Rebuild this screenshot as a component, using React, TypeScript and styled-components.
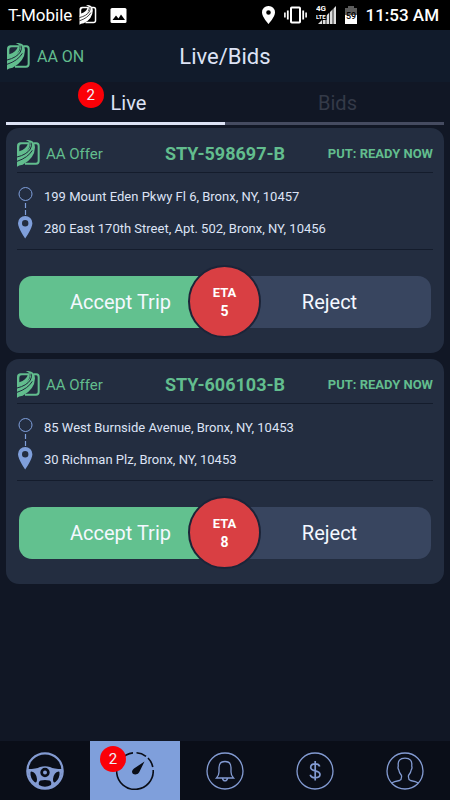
import React from "react";
import styled, { createGlobalStyle } from "styled-components";

const GREEN = "#62bd8e";
const BLUE = "#7f9fdb";

const GlobalStyle = createGlobalStyle`
  *, *::before, *::after { box-sizing: border-box; }
  body {
    margin: 0;
    background: #111725;
    color: #dde3f5;
    font-family: Roboto, "Liberation Sans", sans-serif;
  }
  button {
    margin: 0;
    padding: 0;
    border: 0;
    background: none;
    color: inherit;
    font: inherit;
    cursor: pointer;
  }
  svg { display: block; flex: none; }
`;

const Screen = styled.div`
  display: flex;
  flex-direction: column;
  min-height: 100vh;
`;

const StatusBar = styled.div`
  display: flex;
  align-items: center;
  justify-content: space-between;
  height: 30px;
  padding: 0 11px 0 8px;
  background: #000;
  color: #fff;
  font-size: 17px;
`;

const StatusGroup = styled.div<{ $gap: number }>`
  display: flex;
  align-items: center;
  gap: ${(p) => p.$gap}px;
`;

const Clock = styled.span`
  font-weight: 500;
`;

const Header = styled.header`
  display: grid;
  grid-template-columns: 1fr auto 1fr;
  align-items: center;
  height: 52px;
  padding: 0 7px;
  background: #111b2b;
`;

const AutoAccept = styled.div`
  display: flex;
  align-items: center;
  gap: 7px;
  color: ${GREEN};
  font-size: 16px;
`;

const Title = styled.h1`
  margin: 0;
  font-size: 22px;
  font-weight: 400;
`;

const Tabs = styled.div`
  display: flex;
  padding: 0 6px;
`;

const Tab = styled.button<{ $active?: boolean }>`
  display: flex;
  flex: 1;
  align-items: center;
  justify-content: center;
  height: 43px;
  padding-top: 2px;
  border-bottom: 3px solid ${(p) => (p.$active ? "#dde3f5" : "#454b60")};
  color: ${(p) => (p.$active ? "#dde3f5" : "#343a48")};
  font-size: 20px;
`;

const TabLabel = styled.span<{ $badged?: boolean }>`
  position: relative;
  padding-left: ${(p) => (p.$badged ? 26 : 6)}px;
`;

const Badge = styled.span<{ $left: number; $top: number }>`
  position: absolute;
  left: ${(p) => p.$left}px;
  top: ${(p) => p.$top}px;
  width: 26px;
  height: 26px;
  border-radius: 50%;
  background: #fb0007;
  color: #eef0fa;
  font-size: 15px;
  line-height: 26px;
  text-align: center;
`;

const Offers = styled.main`
  display: flex;
  flex: 1;
  flex-direction: column;
  gap: 6px;
  padding: 3px 6px 6px;
`;

const Card = styled.article`
  padding: 0 11px 25px;
  border-radius: 13px;
  background: #232d40;
`;

const CardHeader = styled.div`
  display: grid;
  grid-template-columns: 1fr auto 1fr;
  align-items: center;
  height: 45px;
  padding-top: 7px;
  border-bottom: 1px solid #141c2c;
  color: ${GREEN};
`;

const OfferKind = styled.span`
  display: flex;
  align-items: center;
  gap: 6px;
  font-size: 15px;
`;

const TripId = styled.h2`
  margin: 0;
  font-size: 18px;
  font-weight: 700;
`;

const Pickup = styled.span`
  font-size: 13px;
  font-weight: 700;
  text-align: right;
`;

const Route = styled.div`
  display: flex;
  gap: 11px;
  height: 77px;
  padding-top: 14px;
  border-bottom: 1px solid #141c2c;
`;

const Stops = styled.ul`
  margin: 0;
  padding: 0;
  list-style: none;
  font-size: 13px;
  line-height: 20px;
`;

const Stop = styled.li`
  margin-bottom: 12px;
`;

const Actions = styled.div`
  position: relative;
  display: flex;
  margin: 26px 2px 0;
`;

const Action = styled.button<{ $accept?: boolean }>`
  flex: 1;
  height: 52px;
  padding: ${(p) => (p.$accept ? "0 3px 0 0" : "0 0 0 3px")};
  border-radius: ${(p) => (p.$accept ? "13px 0 0 13px" : "0 13px 13px 0")};
  background: ${(p) => (p.$accept ? "#62c18f" : "#38455f")};
  color: #f4f8ff;
  font-size: 20px;
`;

const Eta = styled.div`
  position: absolute;
  left: 50%;
  top: 50%;
  display: flex;
  flex-direction: column;
  align-items: center;
  justify-content: center;
  width: 73px;
  height: 73px;
  margin: -37px;
  border: 2px solid #1c2438;
  border-radius: 50%;
  background: #d93f43;
  color: #fff;
  font-size: 13px;
  font-weight: 700;
  line-height: 18px;
`;

const EtaValue = styled.span`
  font-size: 14px;
`;

const BottomNav = styled.nav`
  display: flex;
  height: 59px;
  background: #0a0e18;
`;

const NavItem = styled.button<{ $active?: boolean }>`
  position: relative;
  display: flex;
  flex: 1;
  align-items: center;
  justify-content: center;
  background: ${(p) => (p.$active ? BLUE : "transparent")};
  color: ${(p) => (p.$active ? "#0a0e18" : "#839bd2")};
`;

const NavIconBox = styled.span`
  position: relative;
  display: block;
`;

interface LogoProps {
  width?: number;
  height?: number;
  gapColor?: string;
}

const Logo = ({ width = 23, height = 27, gapColor = "#1f293b" }: LogoProps) => (
  <svg width={width} height={height} viewBox="0 0 69 81" aria-hidden="true">
    <path d="M50 10H58Q65 10 65 18V63Q65 71 57 71H24" fill="none" stroke="currentColor" strokeWidth="6" />
    <path d="M0 48V18Q0 7 11 7H38Q40 17 34 27Q25 42 0 48Z" fill="currentColor" />
    <path d="M7 34V20Q7 13 14 13H32Q28 27 7 34Z" fill={gapColor} />
    <path d="M26 0Q54-2 54 22Q53 56 17 74Q5 75 0 80V44Q28 38 37 24Q46 7 26 0Z" fill="currentColor" />
    <path d="M0 51Q29 44 40 27Q46 16 42 8M0 64Q33 53 46 31" fill="none" stroke={gapColor} strokeWidth="3" />
  </svg>
);

const PictureIcon = () => (
  <svg width="17" height="17" viewBox="0 0 17 17" aria-hidden="true">
    <rect x="0.5" y="1" width="16" height="15" rx="1.5" fill="#fff" />
    <path d="M2.5 13 6 8.5 8.5 11.5 11 7.5 15 13Z" fill="#000" />
  </svg>
);

const LocationIcon = () => (
  <svg width="13" height="18" viewBox="0 0 13 18" aria-hidden="true">
    <path fill="#fff" fillRule="evenodd" d="M6.5 0A6.4 6.4 0 0 0 0 6.5C0 11 6.5 18 6.5 18S13 11 13 6.5A6.4 6.4 0 0 0 6.5 0Zm0 4.2a2.3 2.3 0 1 1 0 4.6 2.3 2.3 0 0 1 0-4.6Z" />
  </svg>
);

const VibrateIcon = () => (
  <svg width="23" height="18" viewBox="0 0 23 18" fill="none" stroke="#fff" aria-hidden="true">
    <rect x="7" y="1.5" width="9" height="15" rx="0.8" strokeWidth="2" />
    <path d="M3.8 4.5v9M19.2 4.5v9" strokeWidth="1.8" />
    <path d="M.9 6.5v5M22.1 6.5v5" strokeWidth="1.6" />
  </svg>
);

const SignalIcon = () => (
  <svg width="20" height="20" viewBox="0 0 20 20" aria-hidden="true">
    <path d="M2 19 20 1V19Z" fill="#ddd" />
    <path d="M6.5 12v8M10 9v11M13.5 5v15M17 2v18" stroke="#000" strokeWidth="0.8" />
    <g fill="#fff" stroke="#000" strokeWidth="2" paintOrder="stroke" fontFamily="Roboto, sans-serif" fontWeight="700">
      <text x="0" y="6" fontSize="8">4G</text>
      <text x="0" y="14" fontSize="6">LTE</text>
    </g>
  </svg>
);

const BatteryIcon = () => (
  <svg width="12" height="18" viewBox="0 0 12 18" aria-hidden="true">
    <path d="M3 0h6v2h3v8H0V2h3Z" fill="#5c5c5c" />
    <path d="M0 9h12v9H0Z" fill="#fff" />
    <text x="6" y="13" textAnchor="middle" fontFamily="Roboto, sans-serif" fontWeight="500" fontSize="9" fill="#000">59</text>
  </svg>
);

const RouteIcon = () => (
  <svg width="16" height="53" viewBox="0 0 16 53" aria-hidden="true">
    <circle cx="8.5" cy="7" r="6.5" fill="none" stroke={BLUE} strokeWidth="1" />
    <path d="M8.5 16v5M8.5 23v5" stroke={BLUE} strokeWidth="1.2" />
    <path fill={BLUE} fillRule="evenodd" d="M8.2 29A7.2 7.2 0 0 0 1 36.2C1 41 8.2 51.5 8.2 51.5S15.4 41 15.4 36.2A7.2 7.2 0 0 0 8.2 29Zm0 4a3.2 3.2 0 1 1 0 6.4 3.2 3.2 0 0 1 0-6.4Z" />
  </svg>
);

const navSvg = {
  width: 38,
  height: 38,
  viewBox: "0 0 38 38",
  fill: "none",
  stroke: "currentColor",
  strokeWidth: 1.3,
  "aria-hidden": true,
} as const;

const WheelIcon = () => (
  <svg {...navSvg}>
    <circle cx="19" cy="19" r="17.7" strokeWidth="2.2" />
    <path fill="currentColor" stroke="none" fillRule="evenodd" d="M2 17Q10 17 14 15Q19 13.5 24 15Q28 17 36 17V21Q34 32 25 35.5Q19 37.5 13 35.5Q4 32 2 21ZM19 15.8a4.7 4.7 0 1 0 0 9.4 4.7 4.7 0 0 0 0-9.4ZM4.5 20.5Q4 26 8.5 30Q11 31.5 11 27Q10 20 5.5 19.5Q4.5 19.5 4.5 20.5ZM33.5 20.5Q34 26 29.5 30Q27 31.5 27 27Q28 20 32.5 19.5Q33.5 19.5 33.5 20.5ZM14.5 28.5Q12 30 13 33Q19 36.5 25 33Q26 30 23.5 28.5Q19 27.5 14.5 28.5Z" />
    <circle cx="19" cy="20.5" r="2" fill="currentColor" stroke="none" />
  </svg>
);

const GaugeIcon = () => (
  <svg {...navSvg}>
    <path strokeWidth="1.6" d="M37.2 18A18.3 18.3 0 1 1 17 .9M20.5 .8A18 18 0 0 1 30 4.3M32 6A18 18 0 0 1 36.8 15" />
    <path fill="currentColor" stroke="none" d="M28.5 9.5 23.2 20.3Q22.5 22 19.5 22.5Q16 22.5 16 19.5Q16.2 18 18 16.5Z" />
  </svg>
);

const BellIcon = () => (
  <svg {...navSvg}>
    <circle cx="19" cy="19" r="18" />
    <path d="M10.5 26Q13 23.5 13 20V15.5Q13 9.5 19 9.5Q25 9.5 25 15.5V20Q25 23.5 27.5 26ZM16.5 26.5Q17 28.8 19 28.8Q21 28.8 21.5 26.5" />
  </svg>
);

const DollarIcon = () => (
  <svg {...navSvg}>
    <circle cx="19" cy="19" r="18" />
    <path strokeWidth="1.7" d="M23.7 14.5Q23 11.8 19.2 11.8Q14.7 11.8 14.7 15.3Q14.7 18 19.2 18.8Q24 19.7 24 22.5Q24 25.7 19.2 25.7Q15 25.7 14.2 22.7M19.2 9V28.5" />
  </svg>
);

const PersonIcon = () => (
  <svg {...navSvg}>
    <circle cx="19" cy="19" r="18" />
    <path d="M5.5 31Q8 29.5 13.5 28.5Q16 27.5 15.5 23.5Q13 20.5 12.8 18Q11.5 16 12.3 14Q11.3 6.2 19 6.2Q26.7 6.2 25.7 14Q26.5 16 25.2 18Q25 20.5 22.5 23.5Q22 27.5 24.5 28.5Q30 29.5 32.5 31" />
  </svg>
);

interface Offer {
  id: string;
  from: string;
  to: string;
  eta: number;
}

const offers: Offer[] = [
  {
    id: "STY-598697-B",
    from: "199 Mount Eden Pkwy Fl 6, Bronx, NY, 10457",
    to: "280 East 170th Street, Apt. 502, Bronx, NY, 10456",
    eta: 5,
  },
  {
    id: "STY-606103-B",
    from: "85 West Burnside Avenue, Bronx, NY, 10453",
    to: "30 Richman Plz, Bronx, NY, 10453",
    eta: 8,
  },
];

const OfferCard = ({ offer }: { offer: Offer }) => (
  <Card>
    <CardHeader>
      <OfferKind>
        <Logo />
        AA Offer
      </OfferKind>
      <TripId>{offer.id}</TripId>
      <Pickup>PUT: READY NOW</Pickup>
    </CardHeader>
    <Route>
      <RouteIcon />
      <Stops>
        <Stop>{offer.from}</Stop>
        <Stop>{offer.to}</Stop>
      </Stops>
    </Route>
    <Actions>
      <Action $accept>Accept Trip</Action>
      <Action>Reject</Action>
      <Eta>
        <span>ETA</span>
        <EtaValue>{offer.eta}</EtaValue>
      </Eta>
    </Actions>
  </Card>
);

export default function App() {
  return (
    <Screen>
      <GlobalStyle />
      <StatusBar>
        <StatusGroup $gap={13}>
          <StatusGroup $gap={7}>
            T-Mobile
            <Logo width={18} height={20} gapColor="#000" />
          </StatusGroup>
          <PictureIcon />
        </StatusGroup>
        <StatusGroup $gap={9}>
          <LocationIcon />
          <VibrateIcon />
          <SignalIcon />
          <BatteryIcon />
          <Clock>11:53 AM</Clock>
        </StatusGroup>
      </StatusBar>
      <Header>
        <AutoAccept>
          <Logo />
          AA ON
        </AutoAccept>
        <Title>Live/Bids</Title>
      </Header>
      <Tabs role="tablist">
        <Tab role="tab" aria-selected="true" $active>
          <TabLabel $badged>
            <Badge $left={-7} $top={-9}>2</Badge>
            Live
          </TabLabel>
        </Tab>
        <Tab role="tab" aria-selected="false">
          <TabLabel>Bids</TabLabel>
        </Tab>
      </Tabs>
      <Offers>
        {offers.map((offer) => (
          <OfferCard key={offer.id} offer={offer} />
        ))}
      </Offers>
      <BottomNav>
        <NavItem aria-label="Drive">
          <WheelIcon />
        </NavItem>
        <NavItem aria-label="Live and bids" $active>
          <NavIconBox>
            <GaugeIcon />
            <Badge $left={-16} $top={-6}>2</Badge>
          </NavIconBox>
        </NavItem>
        <NavItem aria-label="Notifications">
          <BellIcon />
        </NavItem>
        <NavItem aria-label="Earnings">
          <DollarIcon />
        </NavItem>
        <NavItem aria-label="Profile">
          <PersonIcon />
        </NavItem>
      </BottomNav>
    </Screen>
  );
}
